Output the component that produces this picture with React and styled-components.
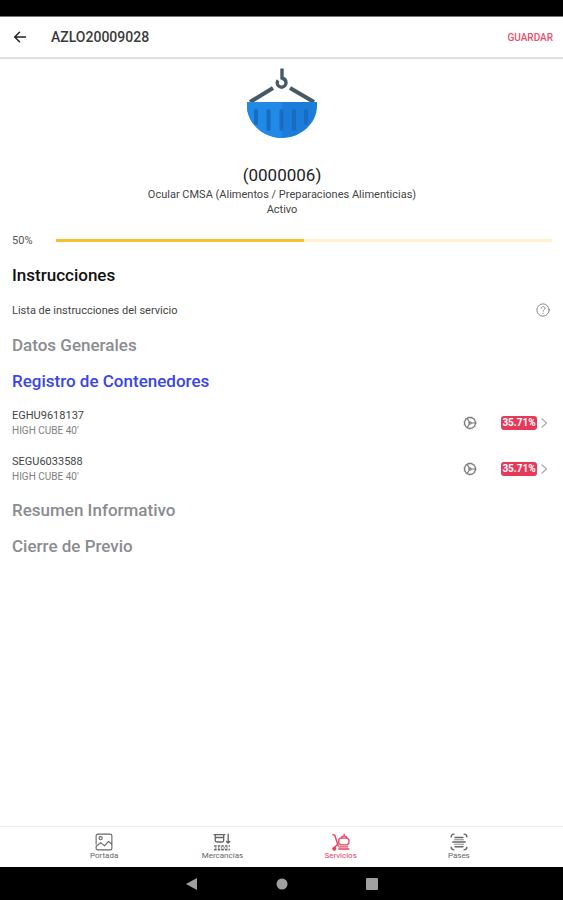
import React, { useState } from "react";
import styled, { createGlobalStyle } from "styled-components";

// Global styles
const GlobalStyle = createGlobalStyle`
  body {
    margin: 0;
    background: #fff;
    color: #222;
    font-family: Roboto, "Liberation Sans", sans-serif;
  }

  button {
    font-family: inherit;
    color: inherit;
    background: none;
    border: none;
    padding: 0;
    cursor: pointer;
  }
`;

// Styled components
const Screen = styled.div`
  display: flex;
  flex-direction: column;
  min-height: 100vh;
`;

const StatusBar = styled.div`
  height: 16px;
  background: #000;
  border-bottom: 1px solid #777;
`;

const Header = styled.header`
  display: flex;
  align-items: center;
  height: 40px;
  padding: 0 10px 0 12px;
  border-bottom: 2px solid #dedede;
`;

const BackButton = styled.button`
  display: flex;
  margin-right: 23px;
`;

const HeaderTitle = styled.h1`
  flex: 1;
  margin: 0;
  font-size: 14px;
  font-weight: 500;
  color: #3a3a3a;
`;

const SaveButton = styled.button`
  font-size: 10px;
  font-weight: 500;
  color: #e8506b;
`;

const Content = styled.main`
  flex: 1;
  padding: 0 11px 0 12px;
`;

const Hero = styled.section`
  display: flex;
  flex-direction: column;
  align-items: center;
  padding: 9px 0 14px;
  text-align: center;
`;

const ServiceTitle = styled.h2`
  margin: 24px 0 0;
  font-size: 17px;
  font-weight: 400;
  line-height: 23px;
`;

const ServiceText = styled.p`
  margin: 0;
  font-size: 11px;
  line-height: 15px;
  color: #444;
`;

const ProgressRow = styled.div`
  display: flex;
  align-items: center;
  height: 18px;
  margin-bottom: 8px;
`;

const ProgressLabel = styled.span`
  width: 44px;
  font-size: 11px;
  color: #555;
`;

const ProgressBar = styled.div`
  flex: 1;
  height: 3px;
  background: #fff2cc;
`;

const Progress = styled.div`
  height: 100%;
  background: #fbc02d;
`;

const SectionTitle = styled.h3`
  margin: 0;
  font-size: 17px;
  font-weight: 500;
  line-height: 36px;
  color: ${({ $active }) => ($active ? "#3a45e8" : "#8b8c90")};
`;

const MainTitle = styled(SectionTitle)`
  color: #111;
`;

const SectionButton = styled.button`
  display: block;
  width: 100%;
  font-size: inherit;
  font-weight: inherit;
  line-height: inherit;
  text-align: left;
`;

const InfoRow = styled.div`
  display: flex;
  align-items: center;
  justify-content: space-between;
  height: 34px;
  padding-right: 2px;
  font-size: 11px;
  color: #444;
`;

const HelpButton = styled.button`
  display: flex;
`;

const ContainerList = styled.ul`
  margin: 0;
  padding: 1px 0 0;
  list-style: none;
`;

const ContainerButton = styled.button`
  display: flex;
  align-items: center;
  width: 100%;
  height: 46px;
  padding-right: 4px;
  text-align: left;
`;

const ContainerText = styled.span`
  flex: 1;
  display: flex;
  flex-direction: column;
  font-size: 11px;
  line-height: 15px;
  color: #444;
`;

const ContainerType = styled.small`
  font-size: 10px;
  color: #808080;
`;

const Badge = styled.span`
  box-sizing: border-box;
  width: 36px;
  margin: 0 3px 0 24px;
  border-radius: 3px;
  background: #e5395a;
  color: #fff;
  font-size: 10px;
  font-weight: 700;
  line-height: 14px;
  text-align: center;
`;

const TabBar = styled.nav`
  display: flex;
  justify-content: center;
  height: 40px;
  border-top: 1px solid #eee;
`;

const TabButton = styled.button`
  flex: 0 1 21%;
  display: flex;
  flex-direction: column;
  align-items: center;
  padding-top: 6px;
  font-size: 8px;
  line-height: 10px;
  color: ${({ $active }) => ($active ? "#e8405f" : "#666")};
`;

const SystemBar = styled.div`
  display: flex;
  align-items: center;
  justify-content: center;
  gap: 74px;
  height: 33px;
  background: #000;
`;

const SystemButton = styled.button`
  display: flex;
`;

// Icons
const StrokeIcon = ({ size = 16, children }) => (
  <svg
    width={size}
    height={size}
    viewBox="0 0 16 16"
    fill="none"
    stroke="currentColor"
    strokeLinecap="round"
    strokeLinejoin="round"
    aria-hidden="true"
  >
    {children}
  </svg>
);

const BackIcon = () => (
  <StrokeIcon>
    <path d="M13.5 8H3M7.5 3.2L2.7 8l4.8 4.8" strokeWidth="1.5" />
  </StrokeIcon>
);

const HelpIcon = () => (
  <StrokeIcon size={14}>
    <circle cx="8" cy="8" r="7" stroke="#777" />
    <path d="M5.8 6.2c0-3 4.5-2.8 4.5-.2 0 1.7-2.2 1.7-2.2 3.4M8.1 11.6v.3" stroke="#777" />
  </StrokeIcon>
);

const GearIcon = () => (
  <StrokeIcon size={14}>
    <circle cx="8" cy="8" r="6.3" stroke="#777" strokeWidth="1.5" />
    <circle cx="8" cy="8" r="7.2" stroke="#999" strokeWidth="0.8" strokeDasharray="1.4 2.4" strokeLinecap="butt" />
    <circle cx="8" cy="8" r="1.3" stroke="#777" strokeWidth="1.2" />
    <path d="M9.3 8H14M7.3 6.900L4.8 2.800M7.300 9.100l-2.500 4.100" stroke="#777" strokeWidth="1.3" />
  </StrokeIcon>
);

const ChevronIcon = () => (
  <svg width="8" height="12" viewBox="0 0 8 12" fill="none" aria-hidden="true">
    <path d="M1.5 1.5L6.5 6l-5 4.5" stroke="#aaa" strokeWidth="1.2" />
  </svg>
);

const CargoImage = () => (
  <svg width="72" height="72" viewBox="0 0 72 72" fill="none" aria-hidden="true">
    <path d="M4 34L27 20M68 34L44 20" stroke="#455a64" strokeWidth="4" />
    <path
      d="M36 .5v9.500c2.500.7 4 2.500 4 4.800a4.400 4.400 0 0 1-8.800 0c0-1 .3-1.800.9-2.500"
      stroke="#455a64"
      strokeWidth="3.4"
    />
    <path d="M1 34h70v4C71 55 55 70 36 70S1 55 1 38z" fill="#1b7cda" />
    <path d="M1 34h35v36C17 70 1 55 1 38z" fill="#2189e6" />
    <path d="M10 43v12M22.500 43v18M35.500 43v18M48 43v18M60 43v12" stroke="#1a6cc2" strokeWidth="4" strokeLinecap="round" />
  </svg>
);

const CoverIcon = () => (
  <StrokeIcon size={18}>
    <path d="M1 10V2.5C1 1.6 1.6 1 2.5 1h11c.9 0 1.5.6 1.5 1.5v11c0 .9-.6 1.5-1.5 1.5h-11C1.6 15 1 14.4 1 13.5V12l4-3.5 3.5 3L12 7.5l3 2.5" />
    <circle cx="5" cy="4.6" r="1.4" />
  </StrokeIcon>
);

const GoodsIcon = () => (
  <StrokeIcon size={18}>
    <path d="M1 1.5h9.5M2 1.5v5c0 1 .6 1.5 1.5 1.5H8c1 0 1.5-.5 1.5-1.5v-5M2 4h7.5M13.5 1v8M12 7.500L13.500 9 15 7.500" strokeWidth="1.2" />
    <path d="M1 11.5h14M1 14.800h14" strokeWidth="1.4" strokeDasharray="2.2 1" strokeLinecap="butt" />
    <path d="M2 13.2h12" strokeWidth="1" strokeDasharray="1 1.5" strokeLinecap="butt" />
  </StrokeIcon>
);

const ServicesIcon = () => (
  <StrokeIcon size={18}>
    <path d="M.8 1.500L2.500 2l3 9.500" strokeWidth="1.2" />
    <path d="M7 4.500h6.500L15 6v3l-1.500 1.500H7.500L6 9V6zM8.500 4.300c0-2 4.500-2 4.500 0M10.800 2.500V1M5 10L1.500 13.500M6 14.200h9" strokeWidth="1.2" />
    <circle cx="2" cy="14" r="1.300" fill="currentColor" />
    <path d="M6 12.300h8" />
  </StrokeIcon>
);

const PassesIcon = () => (
  <StrokeIcon size={18}>
    <path d="M1 3.500C1 2 2 1 3.500 1M12.500 1C14 1 15 2 15 3.500M1 12.500C1 14 2 15 3.500 15M12.500 15c1.500 0 2.500-1 2.500-2.500" strokeWidth="1.2" />
    <path d="M4.500 4h7M2.500 8h11M4.500 12.300h7" strokeWidth="1.3" />
    <path d="M4 6h8M4 10h8" strokeWidth="0.7" />
  </StrokeIcon>
);

const sections = ["Datos Generales", "Registro de Contenedores", "Resumen Informativo", "Cierre de Previo"];

const containers = [
  { id: "EGHU9618137", type: "HIGH CUBE 40'", progress: "35.71%" },
  { id: "SEGU6033588", type: "HIGH CUBE 40'", progress: "35.71%" },
];

const tabs = [
  { label: "Portada", Icon: CoverIcon },
  { label: "Mercancías", Icon: GoodsIcon },
  { label: "Servicios", Icon: ServicesIcon },
  { label: "Pases", Icon: PassesIcon },
];

// Container list
const Containers = () => (
  <ContainerList>
    {containers.map(({ id, type, progress }) => (
      <li key={id}>
        <ContainerButton>
          <ContainerText>
            {id}
            <ContainerType>{type}</ContainerType>
          </ContainerText>
          <GearIcon />
          <Badge>{progress}</Badge>
          <ChevronIcon />
        </ContainerButton>
      </li>
    ))}
  </ContainerList>
);

// Main screen
const ServiceDetail = () => {
  const [openSection, setOpenSection] = useState("Registro de Contenedores");
  const [currentTab, setCurrentTab] = useState("Servicios");
  const progress = 50;

  return (
    <Screen>
      <StatusBar />
      <Header>
        <BackButton aria-label="Volver">
          <BackIcon />
        </BackButton>
        <HeaderTitle>AZLO20009028</HeaderTitle>
        <SaveButton>GUARDAR</SaveButton>
      </Header>

      <Content>
        <Hero>
          <CargoImage />
          <ServiceTitle>(0000006)</ServiceTitle>
          <ServiceText>Ocular CMSA (Alimentos / Preparaciones Alimenticias)</ServiceText>
          <ServiceText>Activo</ServiceText>
        </Hero>

        <ProgressRow>
          <ProgressLabel id="progress-label">{progress}%</ProgressLabel>
          <ProgressBar role="progressbar" aria-labelledby="progress-label" aria-valuenow={progress}>
            <Progress style={{ width: `${progress}%` }} />
          </ProgressBar>
        </ProgressRow>

        <MainTitle>Instrucciones</MainTitle>
        <InfoRow>
          Lista de instrucciones del servicio
          <HelpButton aria-label="Ayuda">
            <HelpIcon />
          </HelpButton>
        </InfoRow>

        {sections.map((section) => (
          <React.Fragment key={section}>
            <SectionTitle $active={openSection === section}>
              <SectionButton
                aria-expanded={openSection === section}
                onClick={() => setOpenSection(section)}
              >
                {section}
              </SectionButton>
            </SectionTitle>
            {section === "Registro de Contenedores" && openSection === section && <Containers />}
          </React.Fragment>
        ))}
      </Content>

      <TabBar>
        {tabs.map(({ label, Icon }) => (
          <TabButton key={label} $active={currentTab === label} onClick={() => setCurrentTab(label)}>
            <Icon />
            {label}
          </TabButton>
        ))}
      </TabBar>

      <SystemBar>
        <SystemButton aria-label="Atrás">
          <svg width="16" height="16" viewBox="0 0 16 16" fill="#a0a0a0">
            <path d="M13 2v12L2 8z" />
          </svg>
        </SystemButton>
        <SystemButton aria-label="Inicio">
          <svg width="16" height="16" viewBox="0 0 16 16" fill="#a0a0a0">
            <circle cx="8" cy="8" r="5.5" />
          </svg>
        </SystemButton>
        <SystemButton aria-label="Recientes">
          <svg width="16" height="16" viewBox="0 0 16 16" fill="#a0a0a0">
            <rect x="2" y="2" width="12" height="12" rx="1" />
          </svg>
        </SystemButton>
      </SystemBar>
    </Screen>
  );
};

const App = () => (
  <>
    <GlobalStyle />
    <ServiceDetail />
  </>
);

export default App;
